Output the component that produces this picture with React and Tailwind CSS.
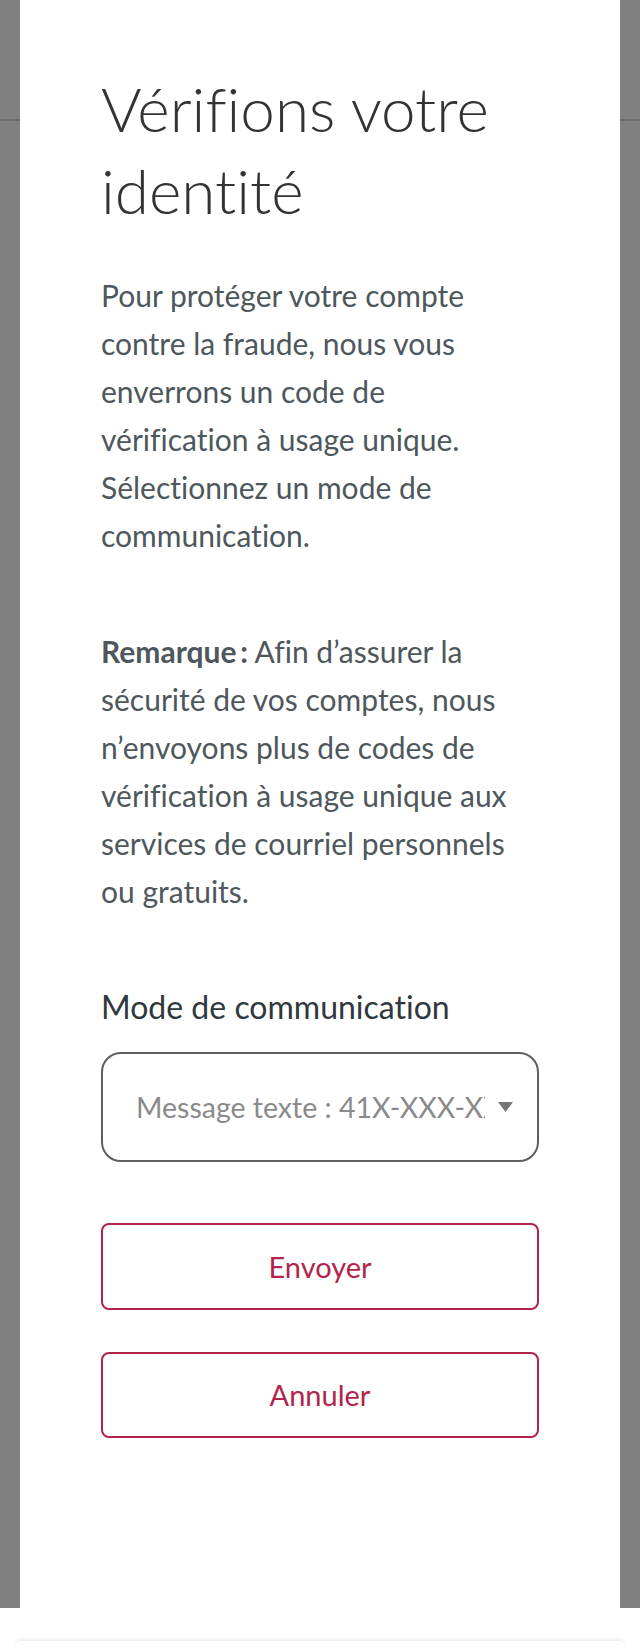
import { useState } from 'react';

const FONT = { fontFamily: 'Lato, "Open Sans", sans-serif' };

function ModeSelect() {
  const [mode] = useState('Message texte : 41X-XXX-XX00');

  return (
    <div className="flex h-[110px] items-center rounded-[20px] border-2 border-[#5f5f5f] bg-white pl-[33px] pr-[24px]">
      <span className="min-w-0 flex-1 overflow-hidden whitespace-nowrap text-[28.5px] text-[#8a8a8a]">
        {mode}
      </span>
      <svg className="ml-[13px] h-[10px] w-[15px] shrink-0" viewBox="0 0 15 10">
        <path d="M0 0h15L7.5 10z" fill="#767676" />
      </svg>
    </div>
  );
}

export default function App() {
  return (
    <div
      className="relative flex min-h-[1648px] flex-col bg-white [font-variant-ligatures:none]"
      style={FONT}
    >
      <div className="flex h-[1608px] bg-[#808080]">
        {/* Background strips with header border behind the overlay */}
        <div className="w-[20px] shrink-0">
          <div className="h-[119px]" />
          <div className="h-[2px] bg-[#6c6c6c]" />
        </div>

        {/* Dialog panel */}
        <div className="flex w-[600px] flex-col bg-white px-[81px] pt-[67px]">
          <h1 className="text-[62px] font-light leading-[82px] text-[#333333]">
            Vérifions votre identité
          </h1>

          <p className="mt-[40px] text-[30px] leading-[48px] text-[#4e575c]">
            Pour protéger votre compte contre la fraude, nous vous enverrons un code de
            vérification à usage unique. Sélectionnez un mode de communication.
          </p>

          <p className="mt-[68px] text-[30px] leading-[48px] text-[#4e575c]">
            <strong className="font-bold">Remarque&#8201;:</strong> Afin d’assurer la sécurité de
            vos comptes, nous n’envoyons plus de codes de vérification à usage unique aux
            services de courriel personnels ou gratuits.
          </p>

          <label className="mt-[68px] block text-[32px] leading-[48px] text-[#2f383d]">
            Mode de communication
          </label>

          <div className="mt-[21px]">
            <ModeSelect />
          </div>

          <button
            type="button"
            className="mt-[61px] h-[87px] rounded-[8px] border-2 border-[#b3244b] bg-white text-[29px] text-[#b3244b]"
          >
            Envoyer
          </button>
          <button
            type="button"
            className="mt-[42px] h-[86px] rounded-[8px] border-2 border-[#b3244b] bg-white text-[29px] text-[#b3244b]"
          >
            Annuler
          </button>
        </div>

        <div className="w-[20px] shrink-0">
          <div className="h-[119px]" />
          <div className="h-[2px] bg-[#6c6c6c]" />
        </div>
      </div>

      {/* Edge of the card below */}
      <div className="mx-[16px] mt-[32px] h-[8px] rounded-t-[4px] border-t border-[#f0f0f0] shadow-[0_-1px_3px_rgba(0,0,0,0.06)]" />
    </div>
  );
}
